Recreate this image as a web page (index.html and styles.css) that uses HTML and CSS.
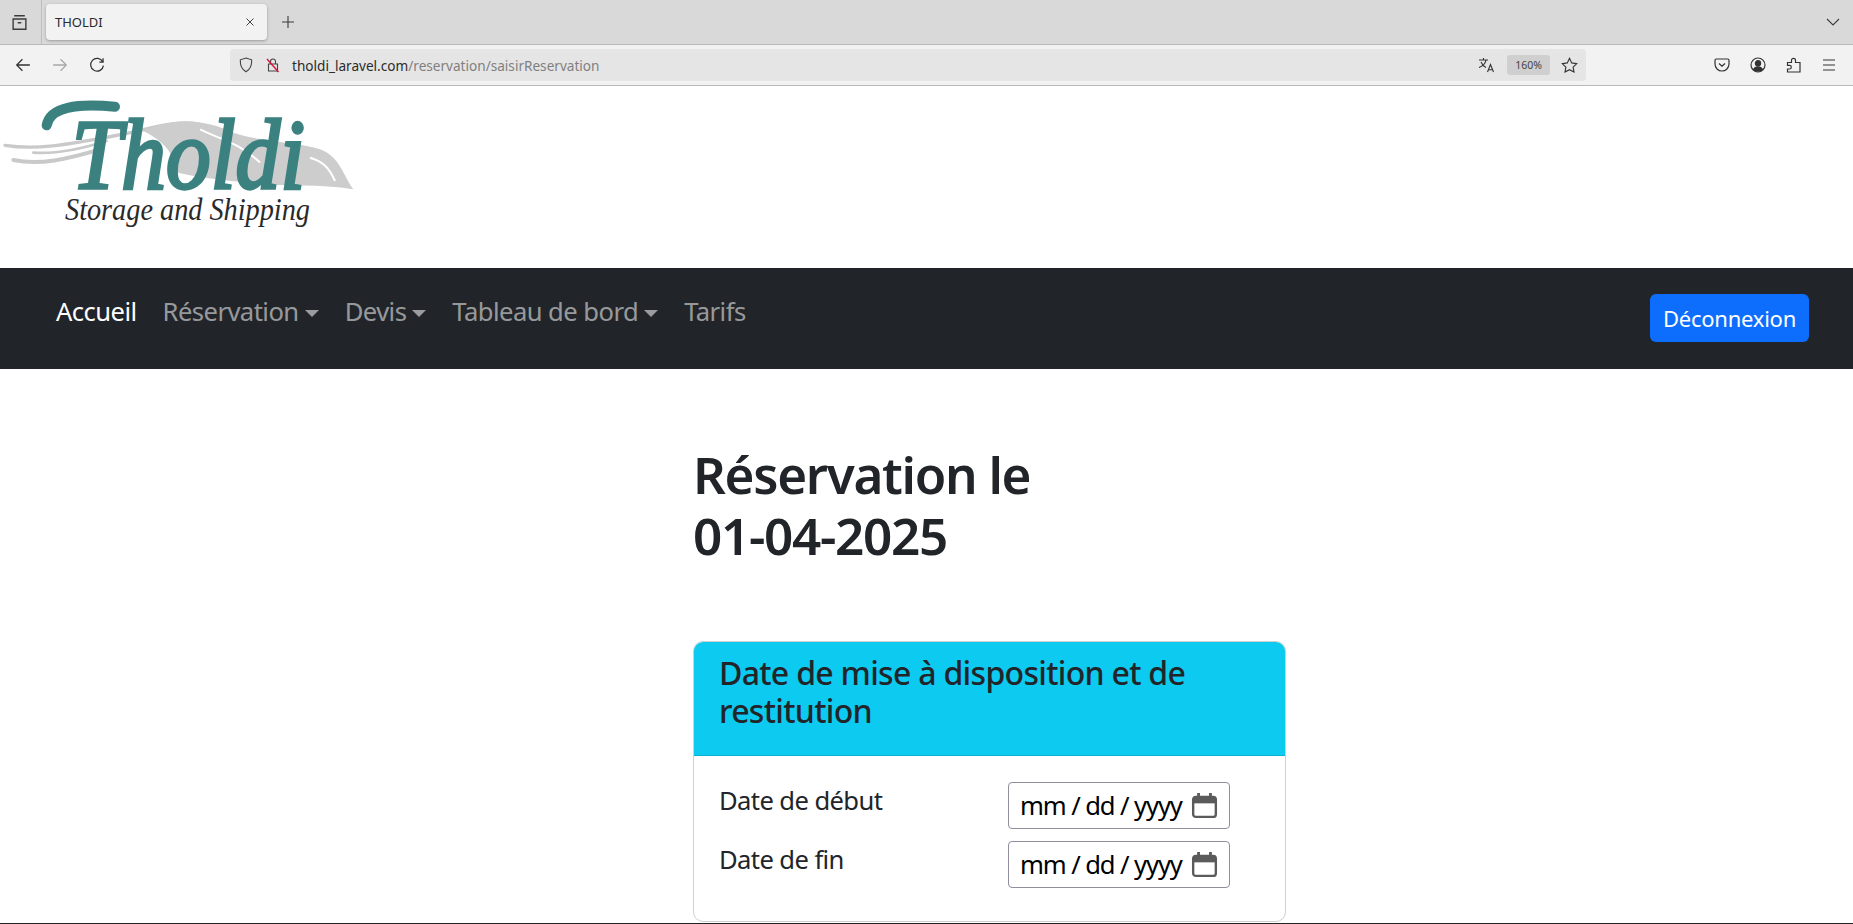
FILE: index.html
```html
<!DOCTYPE html>
<html>
<head>
  <title>THOLDI</title>
  <link rel="stylesheet" href="styles.css">
</head>
<body>
  <div class="tabstrip">
    <span class="ico sidebar-ico">
      <svg width="17" height="17" viewBox="0 0 16 16" fill="none" stroke="#3b3b3b" stroke-width="1.3"><path d="M3 1.700h10M2 4.700h12v9.600H2zM6.300 8.200h3.400"/></svg>
    </span>
    <div class="tab">
      <span class="tab-title">THOLDI</span>
      <svg width="10" height="10" viewBox="0 0 10 10" stroke="#444" stroke-width="1"><path d="M1.500 1.500l7 7M8.500 1.500l-7 7"/></svg>
    </div>
    <span class="ico newtab">
      <svg width="12" height="12" viewBox="0 0 12 12" stroke="#3b3b3b" stroke-width="1.100"><path d="M6 0v12M0 6h12"/></svg>
    </span>
    <span class="ico tablist">
      <svg width="14" height="8" viewBox="0 0 14 8" fill="none" stroke="#3b3b3b" stroke-width="1.100"><path d="M1 1l6 6 6-6"/></svg>
    </span>
  </div>

  <div class="toolbar">
    <div class="nav-btns">
      <svg width="16" height="16" viewBox="0 0 14 14" fill="none" stroke="#333" stroke-width="1.100"><path d="M13 7H1.500M6.500 2L1.500 7l5 5"/></svg>
      <svg width="16" height="16" viewBox="0 0 14 14" fill="none" stroke="#a8a8a8" stroke-width="1.100"><path d="M1 7h11.500M7.500 2l5 5-5 5"/></svg>
      <svg width="16" height="16" viewBox="0 0 14 14" fill="none" stroke="#333" stroke-width="1.100"><path d="M12 4.200A5.600 5.600 0 1 0 12.600 7.500M12.300 1v3.400H9"/></svg>
    </div>
    <div class="urlbar">
      <svg width="14" height="16" viewBox="0 0 14 16" fill="none" stroke="#444" stroke-width="1.100"><path d="M7 1l5.700 1.800c.2 5.500-1.500 9.800-5.700 12C2.800 12.600 1.100 8.300 1.300 2.800z"/></svg>
      <svg class="lock" width="16" height="16" viewBox="0 0 16 16" fill="none"><path d="M5.500 7V4.500a2.500 2.500 0 0 1 5 0V7M3.500 7h9v7h-9z" stroke="#444" stroke-width="1.100"/><path d="M2 2l11.500 13" stroke="#e0103a" stroke-width="1.400"/></svg>
      <span class="url"><b>tholdi_laravel.com</b>/reservation/saisirReservation</span>
      <span class="url-right">
        <svg width="17" height="16" viewBox="0 0 17 16" fill="none" stroke="#333" stroke-width="1.100"><path d="M1 3h9M5.500 1v2M8 3c-.5 3-3 6-7 7.500M3 5c1 2.500 3 4.500 5 5.500M9.500 15l3-7.500 3 7.500M10.500 12.800h4"/></svg>
        <span class="zoom-badge">160%</span>
        <svg width="17" height="17" viewBox="0 0 17 17" fill="none" stroke="#333" stroke-width="1.100"><path d="M8.500 1.300l2.200 4.600 5 .7-3.600 3.500.9 5-4.500-2.400L4 15.100l.9-5L1.300 6.600l5-.7z"/></svg>
      </span>
    </div>
    <div class="tool-icons">
      <svg width="16" height="16" viewBox="0 0 16 16" fill="none" stroke="#333" stroke-width="1.200"><path d="M2.300 2h11.400c.7 0 1.300.6 1.300 1.300V7c0 3.900-3.100 7-7 7s-7-3.100-7-7V3.300C1 2.600 1.600 2 2.300 2zM5 6.500l3 2.800 3-2.800"/></svg>
      <svg width="16" height="16" viewBox="0 0 16 16" fill="none" stroke="#333" stroke-width="1.200"><circle cx="8" cy="8" r="7"/><circle cx="8" cy="6.300" r="2.600" fill="#333"/><path d="M3.500 12.500c1-2 2.500-2.700 4.500-2.700s3.500.7 4.500 2.700c-1.200 1.100-2.800 1.600-4.500 1.600s-3.300-.5-4.500-1.600z" fill="#333"/></svg>
      <svg width="16" height="16" viewBox="0 0 16 16" fill="none" stroke="#333" stroke-width="1.200"><path d="M1.500 5.500h4V3.300a2 2 0 0 1 4 0v2.200h4.500v9.500H1.500v-3h2a1.800 1.800 0 0 0 0-3.600h-2z"/></svg>
      <svg width="14" height="12" viewBox="0 0 14 12" stroke="#333" stroke-width="1.200"><path d="M1 1h12M1 6h12M1 11h12"/></svg>
    </div>
  </div>

  <header class="logo-row">
    <svg class="logo" width="370" height="182" viewBox="0 0 1110 546">
      <g fill="none" stroke="#c9c9c9" stroke-linecap="round">
        <path d="M15 178C120 195 230 170 340 150S520 100 600 115" stroke-width="10"/>
        <path d="M40 222C120 238 200 220 300 190" stroke-width="12"/>
        <path d="M100 200C170 205 240 190 320 165" stroke-width="8"/>
      </g>
      <path class="logo-wave" d="M430 135C520 92 620 100 700 140C800 172 900 168 960 190C1020 212 1030 270 1060 310C960 292 860 302 760 292C660 282 560 272 500 250C540 220 500 170 430 135z"/>
      <path class="logo-wave-cut" d="M600 130C660 160 720 170 780 230M930 215C970 225 990 250 1005 285"/>
      <path class="logo-swoosh" d="M140 118C150 62 230 52 345 62"/>
      <text class="logo-name" x="215" y="305" textLength="700" lengthAdjust="spacingAndGlyphs">Tholdi</text>
      <text class="logo-tag" x="195" y="401" textLength="735" lengthAdjust="spacingAndGlyphs">Storage and Shipping</text>
    </svg>
  </header>

  <nav class="navbar">
    <ul class="nav-links">
      <li><a class="active" href="#">Accueil</a></li>
      <li><a class="dropdown" href="#">Réservation</a></li>
      <li><a class="dropdown" href="#">Devis</a></li>
      <li><a class="dropdown" href="#">Tableau de bord</a></li>
      <li><a href="#">Tarifs</a></li>
    </ul>
    <button class="btn-logout" type="button">Déconnexion</button>
  </nav>

  <main class="content">
    <h2 class="page-title">Réservation le<br>01-04-2025</h2>
    <section class="card">
      <h4 class="card-header">Date de mise à disposition et de restitution</h4>
      <div class="card-body">
        <div class="form-row">
          <label>Date de début</label>
          <div class="date-field">
            <span>mm / dd / yyyy</span>
            <svg width="27" height="27" viewBox="0 0 25 25" fill="none" stroke="#5b5b5b" stroke-width="2.200"><rect x="2" y="4.500" width="21" height="18.500" rx="2.500"/><path d="M2 7.500h21" stroke-width="6"/><path d="M7 1v4M18 1v4" stroke-width="2.600"/></svg>
          </div>
        </div>
        <div class="form-row">
          <label>Date de fin</label>
          <div class="date-field">
            <span>mm / dd / yyyy</span>
            <svg width="27" height="27" viewBox="0 0 25 25" fill="none" stroke="#5b5b5b" stroke-width="2.200"><rect x="2" y="4.500" width="21" height="18.500" rx="2.500"/><path d="M2 7.500h21" stroke-width="6"/><path d="M7 1v4M18 1v4" stroke-width="2.600"/></svg>
          </div>
        </div>
      </div>
    </section>
  </main>
  <div class="window-edge"></div>
</body>
</html>
```

FILE: styles.css
```css
html, body {
  margin: 0;
  height: 924px;
  overflow: hidden;
}
body {
  position: relative;
  background: #fff;
  color: #212529;
  font-family: "Noto Sans", "Open Sans", sans-serif;
  font-size: 25.6px;
}

/* browser chrome */
.tabstrip {
  display: flex;
  align-items: center;
  height: 44px;
  background: #d9d9d9;
  border-bottom: 1px solid #b9b9b9;
}
.ico {
  display: flex;
  align-items: center;
  justify-content: center;
}
.sidebar-ico {
  box-sizing: border-box;
  width: 42px;
  height: 44px;
  padding-right: 3px;
  border-right: 1px solid #bdbdbd;
}
.tab {
  display: flex;
  align-items: center;
  justify-content: space-between;
  box-sizing: border-box;
  width: 221px;
  height: 36px;
  margin-left: 4px;
  padding: 0 12px 0 9px;
  background: #f2f2f2;
  border-radius: 4px;
  box-shadow: 0 1px 3px rgba(0, 0, 0, .3);
}
.tab-title {
  font-size: 13px;
  color: #2b2b2b;
}
.newtab {
  margin-left: 15px;
}
.tablist {
  margin-left: auto;
  margin-right: 13px;
}
.toolbar {
  display: flex;
  align-items: center;
  height: 40px;
  background: #f2f2f2;
  border-bottom: 1px solid #b9b9b9;
}
.nav-btns {
  display: flex;
  align-items: center;
  gap: 21px;
  box-sizing: border-box;
  width: 230px;
  padding-left: 15px;
}
.urlbar {
  display: flex;
  align-items: center;
  box-sizing: border-box;
  width: 1356px;
  height: 32px;
  padding: 0 8px 0 9px;
  background: #e5e5e5;
  border-radius: 4px;
}
.lock {
  margin-left: 12px;
}
.url {
  margin-left: 11px;
  font-size: 13.6px;
  color: #808080;
}
.url b {
  font-weight: 400;
  color: #2b2b2b;
}
.url-right {
  display: flex;
  align-items: center;
  margin-left: auto;
}
.zoom-badge {
  width: 43px;
  height: 20px;
  margin: 0 11px 0 12px;
  background: #cfcfcf;
  border-radius: 3px;
  font-size: 10.5px;
  line-height: 20px;
  text-align: center;
  color: #444;
}
.tool-icons {
  display: flex;
  align-items: center;
  gap: 20px;
  margin-left: 128px;
}

/* page */
.logo-row {
  height: 182px;
}
.logo {
  display: block;
}
.logo-wave {
  fill: #cdcdcd;
}
.logo-wave-cut {
  fill: none;
  stroke: #fff;
  stroke-width: 6;
}
.logo-name {
  font-family: "Liberation Serif", serif;
  font-style: italic;
  font-size: 300px;
  fill: #3b8180;
  stroke: #3b8180;
  stroke-width: 10;
}
.logo-swoosh {
  fill: none;
  stroke: #3b8180;
  stroke-width: 30;
  stroke-linecap: round;
}
.logo-tag {
  font-family: "Liberation Serif", serif;
  font-style: italic;
  font-size: 92px;
  fill: #2a2a2a;
}
.navbar {
  display: flex;
  justify-content: space-between;
  box-sizing: border-box;
  height: 101px;
  padding: 25px 44px 0 56px;
  background: #212529;
}
.nav-links {
  display: flex;
  gap: 26px;
  margin: 0;
  padding: 0;
  list-style: none;
  line-height: 38px;
  letter-spacing: -.55px;
}
.nav-links a {
  color: rgba(255, 255, 255, .55);
  text-decoration: none;
}
.nav-links a.active {
  color: #fff;
}
.dropdown::after {
  content: "";
  display: inline-block;
  margin-left: 6px;
  vertical-align: 4px;
  border-top: 7px solid;
  border-left: 7.5px solid transparent;
  border-right: 7.5px solid transparent;
}
.btn-logout {
  width: 159px;
  height: 48px;
  margin-top: 1px;
  padding: 0;
  border: none;
  border-radius: 6px;
  background: #0d6efd;
  color: #fff;
  font-family: inherit;
  font-size: 22px;
  letter-spacing: -.25px;
}
.content {
  padding: 75px 0 0 693px;
}
.page-title {
  margin: 0 0 75px;
  font-size: 51.2px;
  font-weight: 600;
  line-height: 61px;
  letter-spacing: -1.3px;
}
.card {
  box-sizing: border-box;
  width: 593px;
  height: 281px;
  border: 1px solid #cfd0d2;
  border-radius: 10px;
  overflow: hidden;
}
.card-header {
  height: 76px;
  margin: 0;
  padding: 12px 25px 25px;
  background: #0dcaf0;
  border-bottom: 1px solid #0ab2d4;
  font-size: 32px;
  font-weight: 500;
  line-height: 38px;
  letter-spacing: -.7px;
}
.card-body {
  padding: 26px 25px 0;
}
.form-row {
  display: flex;
  margin-bottom: 12px;
}
.form-row label {
  width: 289px;
  padding-top: 1px;
  letter-spacing: -.6px;
}
.date-field {
  display: flex;
  align-items: center;
  justify-content: space-between;
  box-sizing: border-box;
  width: 222px;
  height: 47px;
  padding: 0 11px 0 11px;
  border: 1px solid #8f8f9d;
  border-radius: 4px;
  background: #fff;
  color: #000;
  letter-spacing: -1.1px;
  white-space: nowrap;
}
.window-edge {
  position: absolute;
  left: 0;
  right: 0;
  bottom: 0;
  height: 1px;
  background: #222;
}
```
